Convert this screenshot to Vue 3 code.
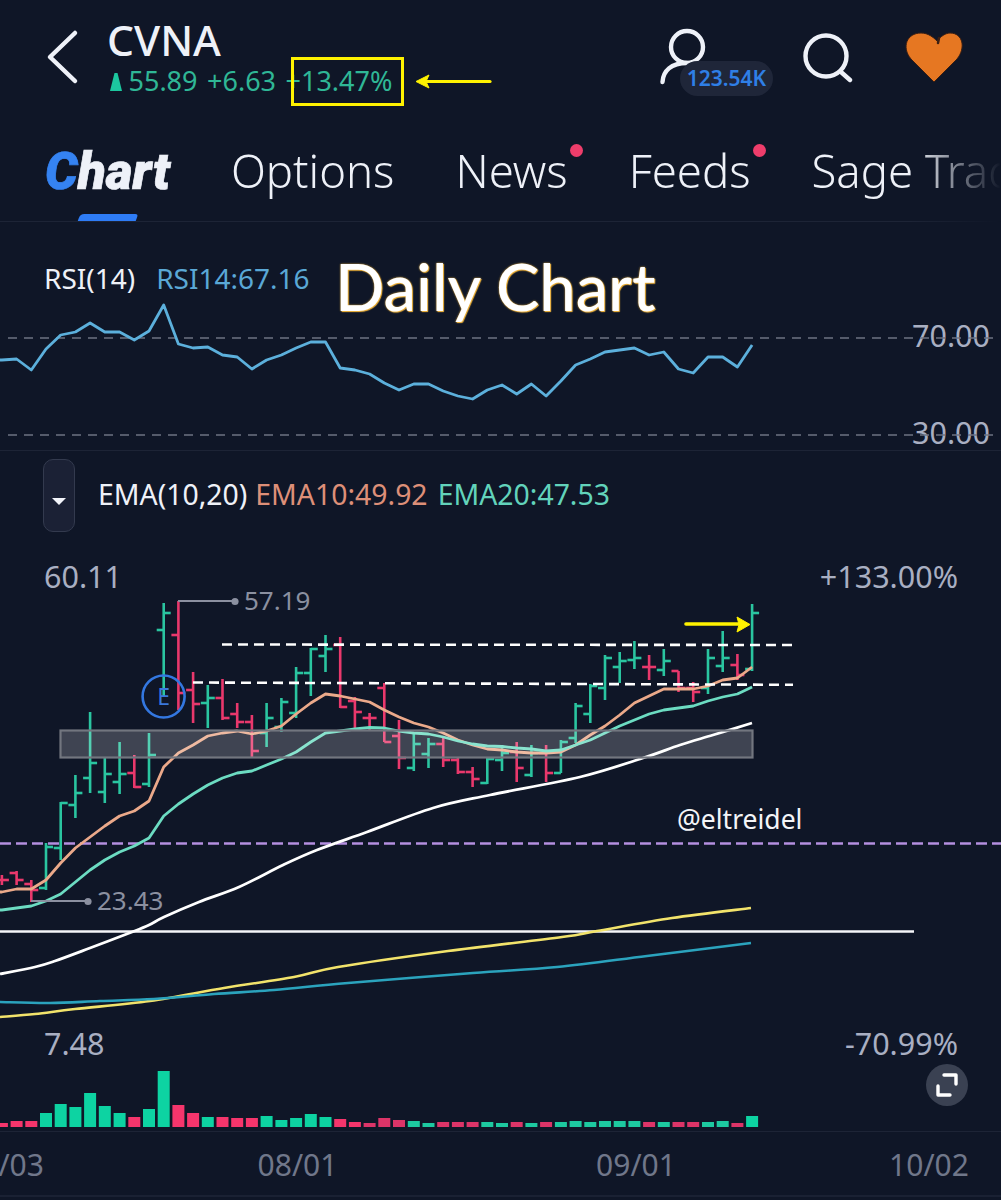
<template>
  <div class="screen">
    <header class="top">
      <svg class="back" width="40" height="60" viewBox="0 0 40 60">
        <path d="M32 6 L7 30 L32 54" fill="none" stroke="#eef1f8" stroke-width="4.5" stroke-linecap="round" stroke-linejoin="round" />
      </svg>
      <div class="ticker">
        <div class="symbol">CVNA</div>
        <div class="quote">
          <svg class="up" width="12" height="19" viewBox="0 0 12 19"><path d="M4.5 1 H7.5 L12 19 H0 Z" fill="#1cc79f" /></svg>
          <span>55.89</span>
          <span>+6.63</span>
          <span class="pct">+13.47%</span>
          <svg class="note" width="77" height="15" viewBox="0 0 77 15">
            <path d="M75 7.5 H8" stroke="#fff200" stroke-width="3.2" stroke-linecap="round" />
            <path d="M1 7.5 L14 1 L11 7.5 L14 14 Z" fill="#fff200" stroke="#fff200" stroke-linejoin="round" />
          </svg>
        </div>
      </div>
      <div class="actions">
        <div class="followers">
          <svg width="50" height="60" viewBox="0 0 50 60">
            <circle cx="27" cy="19" r="16" fill="none" stroke="#eef1f8" stroke-width="4.4" />
            <path d="M2.5 54 C3 43 11 35 27 35" fill="none" stroke="#eef1f8" stroke-width="4.4" stroke-linecap="round" />
          </svg>
          <span class="count">123.54K</span>
        </div>
        <svg class="search" width="50" height="52" viewBox="0 0 50 52">
          <circle cx="23" cy="24" r="20.5" fill="none" stroke="#eef1f8" stroke-width="4.4" />
          <path d="M38 40 L47 48" stroke="#eef1f8" stroke-width="4.4" stroke-linecap="round" />
        </svg>
        <svg class="heart" width="60" height="52" viewBox="0 0 60 52">
          <path d="M30 50 L7 27 C-3 15 3 1 17 1 C24 1 29 5 33 9 C37 4 42 1 46 1 C59 1 62 16 53 27 Z" fill="#e67722" stroke="#3a1f14" stroke-width="1" />
          <path d="M35 6 L34 11" stroke="#3a1f14" stroke-width="2.5" stroke-linecap="round" />
        </svg>
      </div>
    </header>

    <nav class="tabs">
      <a class="tab active"><span class="c">C</span>hart</a>
      <a class="tab">Options</a>
      <a class="tab dot">News</a>
      <a class="tab dot">Feeds</a>
      <a class="tab">Sage Trade</a>
    </nav>

    <section class="rsi">
      <div class="legend rsi-legend">
        <span>RSI(14)</span>
        <span class="blue">RSI14:67.16</span>
      </div>
      <div class="title">Daily Chart</div>
      <svg class="canvas" width="1001" height="228" viewBox="0 222 1001 228">
        <text x="990" y="347" text-anchor="end" class="scale">70.00</text>
        <text x="990" y="444" text-anchor="end" class="scale">30.00</text>
        <line x1="8" x2="993" y1="338" y2="338" class="guide" />
        <line x1="8" x2="993" y1="435" y2="435" class="guide" />
        <polyline :points="line(rsi)" fill="none" stroke="#5cb0dc" stroke-width="2.8" stroke-linejoin="round" />
      </svg>
    </section>

    <section class="main">
      <div class="legend ema-legend">
        <button type="button" class="fold"><i></i></button>
        <span>EMA(10,20)</span>
        <span class="salmon">EMA10:49.92</span>
        <span class="mint">EMA20:47.53</span>
      </div>
      <svg class="canvas" width="1001" height="681" viewBox="0 451 1001 681">
        <text x="44" y="588" class="scale">60.11</text>
        <text x="958" y="588" text-anchor="end" class="scale">+133.00%</text>
        <text x="44" y="1055" class="scale">7.48</text>
        <text x="958" y="1055" text-anchor="end" class="scale">-70.99%</text>

        <line x1="0" x2="1001" y1="843.5" y2="843.5" stroke="#b48fe0" stroke-width="2.4" stroke-dasharray="11 5" />
        <line x1="0" x2="1001" y1="931.5" y2="931.5" stroke="#f4f5f8" stroke-width="2.4" class="hline" />

        <g v-for="b in bars" :key="b.x" :stroke="b.color" stroke-width="2.6" fill="none">
          <line :x1="b.x" :x2="b.x" :y1="b.hi" :y2="b.lo" />
          <line :x1="b.x - 7" :x2="b.x" :y1="b.open" :y2="b.open" />
          <line :x1="b.x" :x2="b.x + 7" :y1="b.close" :y2="b.close" />
        </g>

        <path :d="smooth(yellowMa)" fill="none" stroke="#f2e36b" stroke-width="2.6" />
        <path :d="smooth(tealMa)" fill="none" stroke="#2ba3bd" stroke-width="2.6" />
        <path :d="smooth(whiteMa)" fill="none" stroke="#fff" stroke-width="2.8" />
        <polyline :points="line(ema10)" fill="none" stroke="#eba98a" stroke-width="2.8" stroke-linejoin="round" />
        <polyline :points="line(ema20)" fill="none" stroke="#6cdcc2" stroke-width="2.8" stroke-linejoin="round" />

        <rect x="60.5" y="730.5" width="692" height="27" fill="rgba(255,255,255,0.2)" stroke="#72767f" stroke-width="2.2" />

        <line x1="222" x2="793" y1="644.5" y2="645" class="level" />
        <line x1="193" x2="793" y1="682.5" y2="684.8" class="level" />

        <polyline points="178,601 235,601" fill="none" stroke="#8b90a0" stroke-width="1.8" />
        <circle cx="235" cy="601.5" r="3.6" fill="#8b90a0" />
        <text x="244" y="610" class="mark">57.19</text>
        <polyline points="31,901 87,901" fill="none" stroke="#8b90a0" stroke-width="1.8" />
        <circle cx="88" cy="901.5" r="3.6" fill="#8b90a0" />
        <text x="97" y="910" class="mark">23.43</text>

        <circle cx="163.6" cy="696.5" r="21" fill="none" stroke="#3377e0" stroke-width="2.6" />
        <text x="163.6" y="705" text-anchor="middle" class="earn">E</text>

        <path d="M686 624 H738" stroke="#fff200" stroke-width="3.6" stroke-linecap="round" />
        <path d="M750 624.5 L737 617 L739 624.5 L737 632 Z" fill="#fff200" stroke="#fff200" stroke-width="1" stroke-linejoin="round" />
        <text x="677" y="829" class="tag">@eltreidel</text>

        <rect v-for="b in volume" :key="b.x" :x="b.x - 6" :y="b.top" width="12" :height="1127 - b.top" :fill="b.color" />
      </svg>
      <button type="button" class="expand">
        <svg width="28" height="28" viewBox="0 0 28 28" fill="none" stroke="#fff" stroke-width="3.4" stroke-linecap="round" stroke-linejoin="round">
          <path d="M11 4 H23 V13" />
          <path d="M17 24 H5 V15" />
        </svg>
      </button>
    </section>

    <footer class="axis">
      <svg class="canvas" width="1001" height="63" viewBox="0 1132 1001 63">
        <text x="4" y="1176" text-anchor="middle" class="date">07/03</text>
        <text x="297.5" y="1176" text-anchor="middle" class="date">08/01</text>
        <text x="636" y="1176" text-anchor="middle" class="date">09/01</text>
        <text x="929" y="1176" text-anchor="middle" class="date">10/02</text>
      </svg>
    </footer>
  </div>
</template>

<script setup>
const GREEN = '#2ac5a0'
const RED = '#e9386c'

// bar index -> px, 14.71px per session
const xAt = (i) => +(46 + 14.71 * i).toFixed(1)

// hi, lo, open, close, colour (page y coordinates)
const ohlc = [
  [875, 885, 880, 880, 'r'], [871, 885, 873, 880, 'r'], [880, 902, 884, 890, 'r'],
  [843, 890, 888, 847, 'g'], [802, 860, 848, 803, 'g'], [775, 818, 805, 793, 'g'],
  [712, 793, 778, 763, 'g'], [758, 803, 792, 774, 'g'], [742, 794, 782, 774, 'g'],
  [755, 788, 773, 787, 'r'], [733, 787, 784, 755, 'g'], [603, 697, 630, 613, 'g'],
  [601, 710, 635, 693, 'r'], [672, 723, 690, 704, 'r'], [685, 728, 703, 698, 'g'],
  [679, 720, 698, 718, 'r'], [703, 728, 714, 722, 'r'], [715, 757, 722, 751, 'r'],
  [703, 747, 733, 718, 'g'], [698, 732, 727, 702, 'g'], [667, 718, 713, 673, 'g'],
  [648, 696, 673, 649, 'g'], [635, 672, 656, 649, 'g'], [637, 708, 645, 707, 'r'],
  [697, 730, 701, 712, 'r'], [713, 730, 718, 718, 'r'], [683, 742, 688, 742, 'r'],
  [720, 769, 736, 758, 'r'], [733, 771, 768, 744, 'g'], [738, 768, 754, 744, 'g'],
  [738, 767, 744, 760, 'r'], [757, 774, 760, 772, 'r'], [767, 787, 772, 779, 'r'],
  [757, 784, 783, 759, 'g'], [745, 771, 760, 753, 'g'], [742, 782, 752, 768, 'r'],
  [745, 777, 775, 753, 'g'], [745, 782, 753, 773, 'r'], [740, 773, 773, 742, 'g'],
  [703, 743, 738, 706, 'g'], [684, 723, 714, 686, 'g'], [655, 700, 688, 658, 'g'],
  [652, 683, 667, 661, 'g'], [641, 669, 660, 658, 'g'], [655, 680, 667, 667, 'r'],
  [649, 676, 670, 661, 'g'], [671, 692, 671, 688, 'r'], [682, 702, 688, 692, 'r'],
  [649, 694, 688, 658, 'g'], [631, 672, 666, 658, 'g'], [654, 680, 665, 675, 'r'],
  [604, 671, 669, 613, 'g'],
]

const bars = ohlc.map(([hi, lo, open, close, c], i) => ({
  x: xAt(i - 3), hi, lo, open, close, color: c === 'g' ? GREEN : RED,
}))

const volTops = [
  1123, 1121, 1121, 1113, 1104, 1107, 1093, 1106, 1113, 1117, 1109, 1071, 1105,
  1113, 1117, 1117, 1118, 1118, 1116, 1120, 1118, 1114, 1117, 1119, 1122, 1123,
  1118, 1120, 1121, 1123, 1122, 1122, 1122, 1122, 1123, 1122, 1123, 1122, 1122,
  1121, 1122, 1121, 1121, 1121, 1122, 1122, 1122, 1122, 1122, 1121, 1123, 1116,
]

const volume = volTops.map((top, i) => {
  const up = ohlc[i][4] === 'g'
  return { x: xAt(i - 3), top, color: up ? (i > 24 && i < 51 ? '#1dc9a0' : '#0dd3a2') : (i > 24 && i < 51 ? '#dc3468' : '#f5356c') }
})

const rsi = [
  360, 359, 370, 349, 335, 332, 323, 332, 332, 340, 331, 305, 344, 348, 347, 355, 357, 369,
  360, 355, 348, 342, 342, 368, 370, 374, 383, 390, 384, 384, 391, 396, 399, 390, 385, 394,
  384, 396, 381, 365, 359, 352, 350, 348, 355, 352, 369, 373, 357, 357, 367, 345,
]

const ema10 = [
  892, 889, 889, 880, 863, 848, 837, 826, 816, 811, 801, 767, 753, 745, 736, 733, 731, 734,
  731, 726, 714, 703, 694, 696, 699, 702, 710, 717, 723, 727, 733, 740, 745, 749, 750, 752,
  753, 753, 752, 745, 735, 726, 715, 703, 696, 689, 689, 689, 686, 680, 678, 667,
]

const ema20 = [
  910, 908, 906, 901, 894, 882, 870, 860, 852, 846, 838, 816, 804, 794, 785, 778, 773, 771,
  765, 759, 752, 742, 733, 731, 729, 727.5, 728, 731, 733, 734, 737, 741, 744, 746, 746.5, 748,
  749, 751, 750, 745, 740, 733, 726, 720, 714, 710, 708, 706, 701, 697, 694, 687,
]

const yellowMa = [
  [0, 1017], [35, 1014], [75, 1009], [150, 1001], [224, 988], [294, 977], [338, 967],
  [448, 951], [562, 937], [597, 931], [672, 918], [751, 908],
]
const tealMa = [
  [0, 1002], [50, 1003], [100, 1001], [154, 999], [214, 994], [274, 990], [348, 983],
  [473, 973], [557, 967], [647, 956], [751, 943],
]
const whiteMa = [
  [0, 974], [35, 967], [55, 961], [90, 948], [132, 932], [149, 925], [164, 917], [199, 902],
  [239, 887], [283, 865], [317, 850], [367, 832], [433, 808], [490, 795], [580, 777],
  [643, 758], [680, 745], [713, 735], [752, 723],
]

const line = (ys) => '0,' + ys[0] + ' ' + ys.map((y, i) => xAt(i - 3) + ',' + y).join(' ')

// catmull-rom through the sampled points, the long averages have no visible corners
const smooth = (pts) => {
  let d = `M${pts[0][0]} ${pts[0][1]}`
  for (let i = 0; i < pts.length - 1; i++) {
    const a = pts[i - 1] || pts[i]
    const b = pts[i]
    const c = pts[i + 1]
    const e = pts[i + 2] || c
    d += ` C${b[0] + (c[0] - a[0]) / 6} ${b[1] + (c[1] - a[1]) / 6} ${c[0] - (e[0] - b[0]) / 6} ${c[1] - (e[1] - b[1]) / 6} ${c[0]} ${c[1]}`
  }
  return d
}
</script>

<style scoped>
.screen {
  width: 1001px;
  height: 1200px;
  overflow: hidden;
  display: flex;
  flex-direction: column;
  background: #0f1627;
  font-family: "Noto Sans", "Open Sans", sans-serif;
  color: #eef1f8;
}

.top {
  height: 122px;
  flex: none;
  display: flex;
  box-sizing: border-box;
  padding: 16px 0 0 43px;
}

.back {
  margin-top: 11px;
  flex: none;
}

.ticker {
  margin-left: 24px;
  position: relative;
}

.symbol {
  font-size: 42.5px;
  font-weight: 500;
  line-height: 47px;
}

.quote {
  display: flex;
  align-items: center;
  gap: 9.5px;
  font-size: 27px;
  line-height: 36px;
  color: #2fb796;
  white-space: nowrap;
}

.up {
  margin: 0 -3px 0 3px;
}

.pct {
  position: relative;
}

.pct::after {
  content: "";
  position: absolute;
  left: 5px;
  right: -12px;
  top: -6px;
  bottom: -7px;
  border: 3px solid #fff200;
}

.note {
  margin-left: 13px;
}

.actions {
  margin-left: auto;
  display: flex;
  align-items: flex-start;
  padding-right: 37px;
}

.followers {
  position: relative;
  width: 118px;
  margin-top: 12px;
}

.count {
  position: absolute;
  left: 20px;
  top: 33px;
  width: 93px;
  height: 35px;
  border-radius: 18px;
  background: #1f2639;
  color: #2f7fe6;
  font-size: 21px;
  font-weight: 600;
  line-height: 35px;
  text-align: center;
}

.search {
  margin: 16px 0 0 25px;
}

.heart {
  margin: 16px 0 0 51px;
}

.tabs {
  height: 100px;
  flex: none;
  box-sizing: border-box;
  display: flex;
  gap: 61px;
  padding: 0 0 0 45px;
  border-bottom: 1px solid #1d2436;
  white-space: nowrap;
  overflow: hidden;
  -webkit-mask-image: linear-gradient(90deg, #000 91%, transparent 100%);
  mask-image: linear-gradient(90deg, #000 91%, transparent 100%);
}

.tab {
  position: relative;
  font-size: 45.5px;
  font-weight: 300;
  line-height: 97px;
  height: 100px;
}

.tab.active {
  font-family: Roboto, sans-serif;
  font-size: 51.5px;
  font-style: italic;
  font-weight: 900;
  line-height: 100px;
  -webkit-text-stroke: 0.7px currentColor;
}

.tab.active .c {
  color: #3583f2;
}

.tab.active::after {
  content: "";
  position: absolute;
  left: 34px;
  bottom: 1px;
  width: 58px;
  height: 7px;
  border-radius: 4px 3px 0 0;
  background: #2e7cf6;
  transform: skewX(-20deg);
}

.tab.dot::after {
  content: "";
  position: absolute;
  right: -15px;
  top: 22px;
  width: 13px;
  height: 13px;
  border-radius: 50%;
  background: #ee3d6b;
}

.rsi {
  position: relative;
  height: 228px;
  flex: none;
  border-bottom: 1px solid #1d2436;
}

.main {
  position: relative;
  flex: none;
  height: 680px;
  border-bottom: 1px solid #1d2436;
}

.axis {
  flex: none;
  height: 63px;
  border-bottom: 2px solid #1a2133;
}

.canvas {
  display: block;
  overflow: visible;
}

.legend {
  position: absolute;
  left: 44px;
  display: flex;
  align-items: center;
  font-size: 28px;
  white-space: nowrap;
}

.rsi-legend {
  top: 37px;
  gap: 21px;
}

.ema-legend {
  left: 43px;
  top: 8px;
  gap: 8px;
  font-size: 28.4px;
}

.ema-legend span {
  margin-bottom: 3px;
}

.blue {
  color: #5aa8d6;
}

.salmon {
  color: #dd8f78;
}

.mint {
  color: #62d3bb;
  margin-left: 2px;
}

.fold {
  width: 32px;
  height: 73px;
  margin-right: 15px;
  padding: 0;
  display: flex;
  align-items: center;
  justify-content: center;
  box-sizing: border-box;
  background: #1b2135;
  border: 1.5px solid #333a4e;
  border-radius: 10px;
}

.fold i {
  margin-top: 12px;
  border-left: 7px solid transparent;
  border-right: 7px solid transparent;
  border-top: 7px solid #f2f4fa;
}

.title {
  position: absolute;
  left: 335px;
  top: 19px;
  font-family: Lato, sans-serif;
  font-size: 65px;
  font-weight: 500;
  line-height: 90px;
  color: #fff;
  text-shadow: 0 0 2px #f5b73c, 1px 1px 1px #f5b73c;
  white-space: nowrap;
}

.expand {
  position: absolute;
  left: 926px;
  top: 613px;
  width: 42px;
  height: 42px;
  padding: 0;
  display: flex;
  align-items: center;
  justify-content: center;
  background: #3a4152;
  border: none;
  border-radius: 50%;
}

.guide {
  stroke: #6e7383;
  stroke-width: 1.6;
  stroke-dasharray: 9 7;
}

.level {
  stroke: #fff;
  stroke-width: 2.6;
  stroke-dasharray: 10 6;
}

.hline {
  stroke-dasharray: 914 200;
}

.scale {
  font-size: 30.5px;
  fill: #a9afc2;
}

.mark {
  font-size: 26px;
  fill: #8b90a0;
}

.earn {
  font-size: 23px;
  fill: #3a78dc;
}

.tag {
  font-size: 26.5px;
  fill: #f4f5f8;
}

.date {
  font-size: 30px;
  fill: #70778a;
}
</style>
